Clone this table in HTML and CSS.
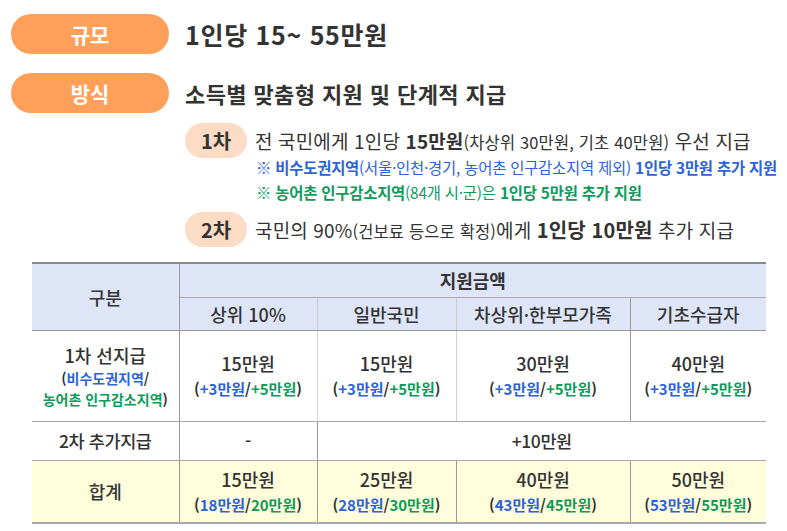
FILE: index.html
```html
<!DOCTYPE html>
<html lang="ko">
<head>
<meta charset="utf-8">
<link rel="stylesheet" href="styles.css">
</head>
<body>
<div class="page">
  <div class="row">
    <div class="pill">규모</div>
    <div class="title">1인당 15~ 55만원</div>
  </div>
  <div class="row">
    <div class="pill">방식</div>
    <div class="subtitle">소득별 맞춤형 지원 및 단계적 지급</div>
  </div>
  <div class="stages">
    <div class="stage">
      <div class="tag">1차</div>
      <div class="desc">전 국민에게 1인당 <b>15만원</b><span class="small">(차상위 30만원, 기초 40만원)</span> 우선 지급</div>
    </div>
    <div class="notes">
      <div class="note blue">※ 비수도권지역<span class="reg">(서울·인천·경기, 농어촌 인구감소지역 제외)</span> 1인당 3만원 추가 지원</div>
      <div class="note green">※ 농어촌 인구감소지역<span class="reg">(84개 시·군)은</span> 1인당 5만원 추가 지원</div>
    </div>
    <div class="stage">
      <div class="tag">2차</div>
      <div class="desc">국민의 90%<span class="small">(건보료 등으로 확정)</span>에게 <b class="big">1인당 10만원</b> 추가 지급</div>
    </div>
  </div>
  <table class="grid">
    <colgroup>
      <col style="width:147px"><col style="width:138px"><col style="width:139px"><col style="width:174px"><col style="width:136px">
    </colgroup>
    <thead>
      <tr class="h1">
        <th rowspan="2" class="first">구분</th>
        <th colspan="4" class="strong">지원금액</th>
      </tr>
      <tr class="h2">
        <th class="lr">상위 10%</th>
        <th class="lr">일반국민</th>
        <th>차상위·한부모가족</th>
        <th>기초수급자</th>
      </tr>
    </thead>
    <tbody>
      <tr class="r1">
        <td class="first"><div class="lbl">1차 선지급</div><div class="sub">(<span class="b">비수도권지역</span>/<br><span class="g">농어촌 인구감소지역</span>)</div></td>
        <td class="lr"><div class="amt">15만원</div><div class="sub">(<span class="b">+3만원</span>/<span class="g">+5만원</span>)</div></td>
        <td class="lr"><div class="amt">15만원</div><div class="sub">(<span class="b">+3만원</span>/<span class="g">+5만원</span>)</div></td>
        <td><div class="amt">30만원</div><div class="sub">(<span class="b">+3만원</span>/<span class="g">+5만원</span>)</div></td>
        <td><div class="amt">40만원</div><div class="sub">(<span class="b">+3만원</span>/<span class="g">+5만원</span>)</div></td>
      </tr>
      <tr class="r2">
        <td class="first plain">2차 추가지급</td>
        <td class="plain">-</td>
        <td colspan="3" class="plain">+10만원</td>
      </tr>
      <tr class="r3">
        <td class="first"><div class="lbl">합계</div></td>
        <td><div class="amt">15만원</div><div class="sub">(<span class="b">18만원</span>/<span class="g">20만원</span>)</div></td>
        <td><div class="amt">25만원</div><div class="sub">(<span class="b">28만원</span>/<span class="g">30만원</span>)</div></td>
        <td><div class="amt">40만원</div><div class="sub">(<span class="b">43만원</span>/<span class="g">45만원</span>)</div></td>
        <td><div class="amt">50만원</div><div class="sub">(<span class="b">53만원</span>/<span class="g">55만원</span>)</div></td>
      </tr>
    </tbody>
  </table>
</div>
</body>
</html>
```
FILE: styles.css
```css
* { box-sizing: border-box; }
html, body { margin: 0; padding: 0; background: #fff; }
body {
  font-family: "Noto Sans CJK KR", "Noto Sans", sans-serif;
  color: #333;
}
.page { padding: 14px 0 0 11px; }
.row {
  display: flex;
  align-items: center;
  gap: 16px;
  height: 40px;
  margin-bottom: 19px;
}
.row + .row { margin-bottom: 10px; }
.pill {
  width: 158px;
  height: 40px;
  border-radius: 20px;
  background: #ffa05a;
  color: #fff;
  font-size: 21px;
  font-weight: 700;
  display: flex;
  align-items: center;
  justify-content: center;
}
.title { font-size: 25px; font-weight: 700; letter-spacing: 0.7px; color: #333; }
.subtitle { font-size: 22px; font-weight: 700; letter-spacing: 0.4px; color: #333; }
.stages { padding-left: 174px; }
.stage { display: flex; align-items: center; gap: 8px; height: 35px; }
.tag {
  width: 62px;
  height: 35px;
  border-radius: 18px;
  background: #fddcc6;
  font-size: 20px;
  font-weight: 700;
  display: flex;
  align-items: center;
  justify-content: center;
  color: #333;
}
.desc { font-size: 19px; color: #333; letter-spacing: 0.15px; white-space: nowrap; }
.desc b { font-weight: 700; }
.desc .big { font-size: 20px; }
.desc .small { font-size: 16.5px; }
.notes { margin: -3px 0 7px 71px; }
.note { font-size: 15.4px; font-weight: 700; line-height: 25px; letter-spacing: -0.2px; white-space: nowrap; }
.note .reg { font-weight: 400; }
.blue { color: #2c63d8; }
.green { color: #0f9b5a; }
.grid {
  margin: 15px 0 0 21px;
  width: 734px;
  border-collapse: collapse;
  table-layout: fixed;
  text-align: center;
  color: #333;
}
.grid th {
  background: #dee5f7;
  font-weight: 500;
  font-size: 18px;
  border: 1px solid #999;
  padding: 0;
}
.grid th.strong { font-weight: 700; }
.grid .h1 th { border-top: 2px solid #8a8a8a; height: 34px; }
.grid .h1 th:last-child { border-right: none; border-bottom: 1px solid #aaa; }
.grid .h2 th { height: 33px; border-bottom: 1px solid #999; }
.grid .h2 th:last-child { border-right: none; }
.grid th.first, .grid td.first { border-left: none; }
.grid th.lr { border-right-color: #ccc; }
.grid td {
  border: 1px solid #999;
  border-top-color: #aaa;
  border-bottom-color: #aaa;
  padding: 0;
  vertical-align: middle;
}
.grid td:last-child { border-right: none; }
.grid .r1 td { height: 91px; }
.grid .r1 td.lr { border-right-color: #d4d4d4; }
.grid .r2 td { height: 39px; }
.grid .r3 td { height: 63px; background: #fffddc; border-bottom: 2px solid #aaa; }
.amt { font-size: 18px; line-height: 26px; font-weight: 500; }
.lbl { font-size: 18px; line-height: 26px; font-weight: 500; }
.plain { font-size: 17.5px; font-weight: 500; letter-spacing: -0.4px; }
.sub { font-size: 15px; line-height: 25px; font-weight: 700; letter-spacing: 0; }
.first .sub { font-size: 14px; line-height: 21px; }
.sub .b { color: #2c63d8; }
.sub .g { color: #0f9b5a; }
```
